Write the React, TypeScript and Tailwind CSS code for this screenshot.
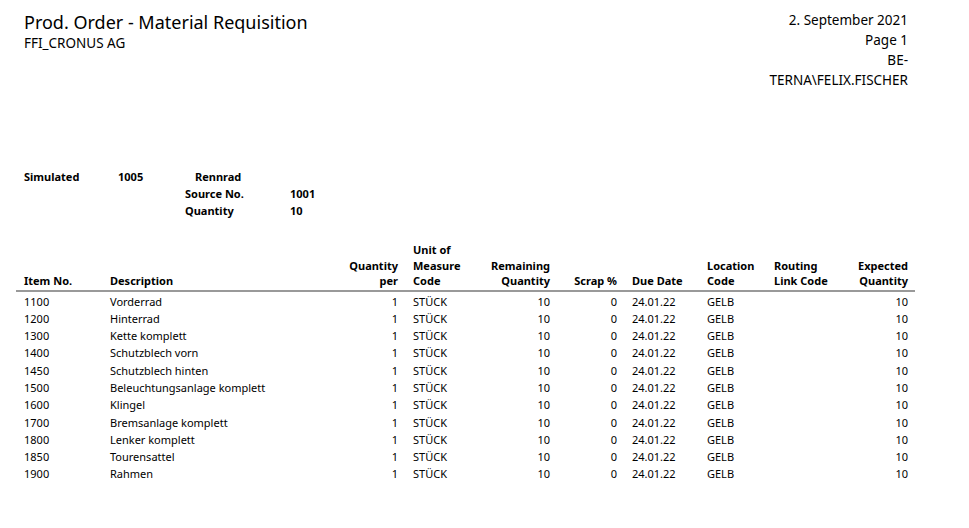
const rows: [string, string][] = [
  ["1100", "Vorderrad"],
  ["1200", "Hinterrad"],
  ["1300", "Kette komplett"],
  ["1400", "Schutzblech vorn"],
  ["1450", "Schutzblech hinten"],
  ["1500", "Beleuchtungsanlage komplett"],
  ["1600", "Klingel"],
  ["1700", "Bremsanlage komplett"],
  ["1800", "Lenker komplett"],
  ["1850", "Tourensattel"],
  ["1900", "Rahmen"],
];
const cols = "grid grid-cols-[86px_230px_73px_67px_70px_82px_75px_67px_66px_68px]";
export default function App() {
  return (
    <div className="h-[528px] w-[969px] bg-white text-black font-['Noto_Sans',sans-serif]">
      <div className="flex justify-between pl-[24px] pr-[61px] pt-[10px]">
        <div>
          <div className="text-[18px] leading-[24px]">Prod. Order - Material Requisition</div>
          <div className="text-[13.5px] leading-[18px]">FFI_CRONUS AG</div>
        </div>
        <div className="text-right text-[13.5px] leading-[20px] w-[160px]">
          <div>2. September 2021</div>
          <div>Page 1</div>
          <div>BE-</div>
          <div>TERNA\FELIX.FISCHER</div>
        </div>
      </div>
      <div className="mt-[78px] pl-[24px] text-[11px] font-bold leading-[17px]">
        <div className="flex">
          <span className="w-[94px]">Simulated</span>
          <span className="w-[77px]">1005</span>
          <span>Rennrad</span>
        </div>
        <div className="flex pl-[161px]">
          <span className="w-[105px]">Source No.</span>
          <span>1001</span>
        </div>
        <div className="flex pl-[161px]">
          <span className="w-[105px]">Quantity</span>
          <span>10</span>
        </div>
      </div>
      <div className="mx-[16px] mt-[23px] w-[899px]">
        <div className={`${cols} items-end border-b-2 border-[#999] pb-[1px] pl-[8px] text-[11px] font-bold leading-[15.5px]`}>
          <div>Item No.</div>
          <div>Description</div>
          <div className="pr-[15px] text-right">Quantity<br />per</div>
          <div>Unit of<br />Measure<br />Code</div>
          <div className="text-right">Remaining<br />Quantity</div>
          <div className="pr-[15px] text-right">Scrap %</div>
          <div>Due Date</div>
          <div>Location<br />Code</div>
          <div>Routing<br />Link Code</div>
          <div className="text-right">Expected<br />Quantity</div>
        </div>
        <div className="pt-[1px] pl-[8px] text-[11px] leading-[17.3px]">
          {rows.map(([n, d]) => (
            <div key={n} className={cols}>
              <div>{n}</div>
              <div>{d}</div>
              <div className="pr-[15px] text-right">1</div>
              <div>STÜCK</div>
              <div className="text-right">10</div>
              <div className="pr-[15px] text-right">0</div>
              <div>24.01.22</div>
              <div>GELB</div>
              <div></div>
              <div className="text-right">10</div>
            </div>
          ))}
        </div>
      </div>
    </div>
  );
}
